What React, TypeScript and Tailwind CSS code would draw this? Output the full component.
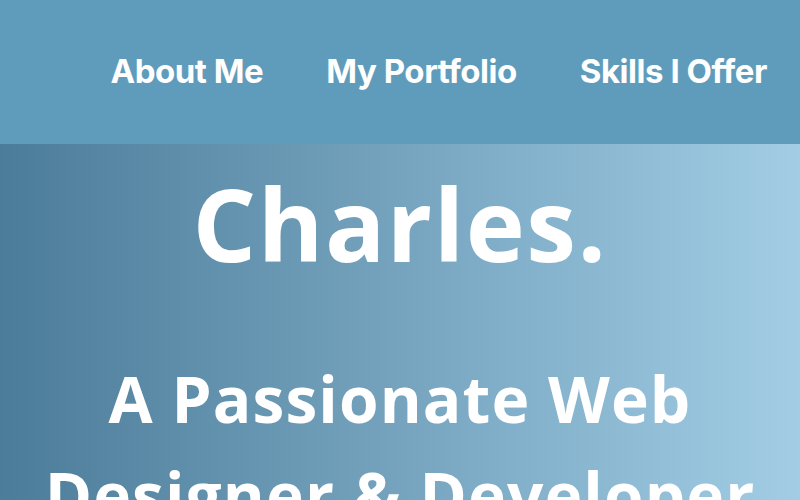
import React from "react";

export default function App() {
  return (
    <div className="w-[800px] h-[500px] overflow-hidden flex flex-col">
      <header className="h-[144px] shrink-0 bg-[#5f9cbb] flex items-center justify-end pr-[33px]">
        <nav className="flex gap-[63px] text-white text-[33px] font-bold tracking-[-0.014em] [font-family:Inter,sans-serif]">
          <a>About Me</a>
          <a>My Portfolio</a>
          <a>Skills I Offer</a>
        </nav>
      </header>
      <main className="flex-1 bg-gradient-to-r from-[#4b7c99] to-[#a2cde5] flex flex-col items-center text-white [font-family:'Open_Sans',sans-serif] font-bold">
        <h1 className="text-[100px] leading-none mt-[29px] tracking-[0.015em]">Charles.</h1>
        <h2 className="text-[64px] leading-[96px] mt-[78px] text-center tracking-[0.017em] whitespace-nowrap">
          A Passionate Web
          <br />
          Designer &amp; Developer
        </h2>
      </main>
    </div>
  );
}
